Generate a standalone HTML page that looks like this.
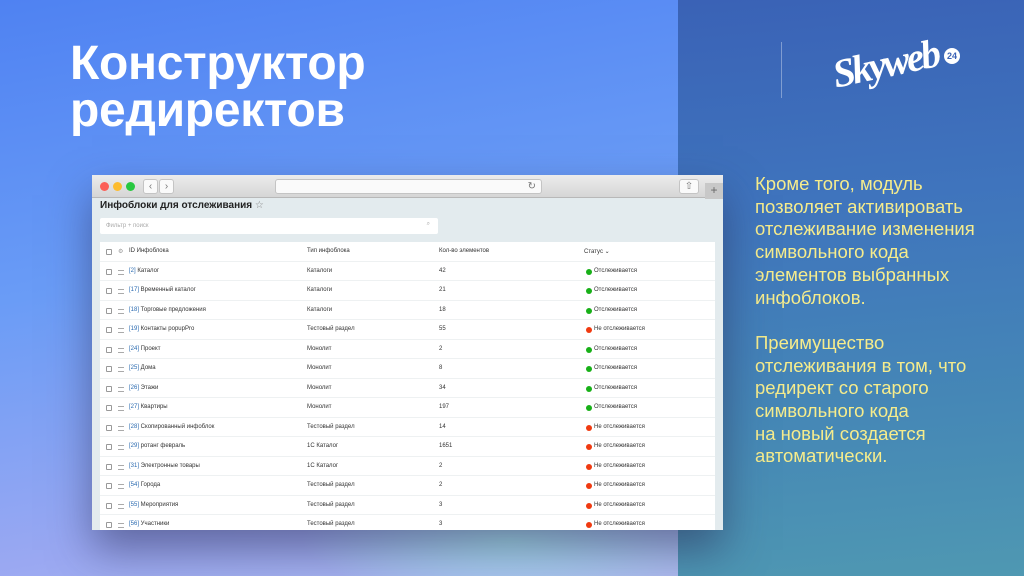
<!DOCTYPE html>
<html style="width:1024px;height:576px;overflow:hidden"><head><meta charset="utf-8"><style>
*{margin:0;padding:0;box-sizing:border-box}
body{width:1024px;height:576px;overflow:hidden;position:relative;font-family:"Liberation Sans","DejaVu Sans",sans-serif;
background:linear-gradient(170deg,#4f82f2 0%,#6a9cf6 40%,#9aa8f2 75%,#b8c4ee 100%)}
.glow{position:absolute;left:300px;top:480px;width:420px;height:120px;background:radial-gradient(ellipse,#a6e0ee 0%,rgba(166,224,238,0) 70%)}
.right{position:absolute;left:678px;top:0;width:346px;height:576px;background:linear-gradient(175deg,#3a62b6 0%,#3f74bd 35%,#4587b6 70%,#4f98b2 100%)}
.title{position:absolute;left:70px;top:40px;color:#fff;font-weight:bold;font-size:48px;line-height:47px;letter-spacing:-0.3px}
.txt{position:absolute;left:755px;top:173px;color:#f6ec8c;font-size:18.5px;line-height:22.7px}
.vline{position:absolute;left:781px;top:42px;width:1px;height:56px;background:rgba(255,255,255,.35)}
.logo{position:absolute;left:832px;top:40px;color:#fff;font:italic bold 40px "Liberation Serif",serif;transform:rotate(-12deg);letter-spacing:-3px}
.badge{position:absolute;left:944px;top:48px;width:16px;height:16px;border-radius:50%;background:#fff;color:#3a62b6;font-size:9px;font-weight:bold;text-align:center;line-height:16px}
.win{position:absolute;left:92px;top:175px;width:631px;height:355px;background:#e3ebee;box-shadow:0 20px 40px rgba(40,40,80,.5);overflow:hidden}
.bar{height:23px;background:linear-gradient(#ececec,#d6d6d6);border-bottom:1px solid #b8b8b8;position:relative}
.d{position:absolute;top:7px;width:9px;height:9px;border-radius:50%}
.btn{position:absolute;top:4px;height:15px;background:#fafafa;border:1px solid #c4c4c4;border-radius:3px;font-size:10px;color:#777;text-align:center;line-height:13px}
.h1{position:absolute;left:8px;top:25px;font-size:10px;font-weight:bold;color:#222}
.search{position:absolute;left:8px;top:43px;width:338px;height:16px;background:#fff;border-radius:2px;font-size:6px;color:#aaa;padding:5px 6px}
.tbl{position:absolute;left:8px;top:67px;width:615px;height:300px;background:#fff}
.r{position:absolute;left:0;width:615px;height:19.5px;border-bottom:1px solid #eef1f2;font-size:6px;color:#333}
.r span{position:absolute;top:6px}
.cb{position:absolute;left:6px;top:7px;width:6px;height:6px;border:1px solid #999;border-radius:1px}
.hd{position:absolute;left:18px;top:8px;width:6px;height:5px;border-top:1px solid #aaa;border-bottom:1px solid #aaa}
.dot{position:absolute;left:486px;top:7px;width:6px;height:6px;border-radius:50%}
.g{background:#18b018}.rd{background:#f03a10}
</style></head><body>
<div class="glow"></div>
<div class="right"></div>
<div class="title">Конструктор<br>редиректов</div>
<div class="vline"></div>
<div class="logo">Skyweb</div>
<div class="badge">24</div>
<div class="txt">Кроме того, модуль<br>позволяет активировать<br>отслеживание изменения<br>символьного кода<br>элементов выбранных<br>инфоблоков.<br><br>Преимущество<br>отслеживания в том, что<br>редирект со старого<br>символьного кода<br>на новый создается<br>автоматически.</div>
<div class="win">
<div class="bar">
<div class="d" style="left:8px;background:#fc5f57"></div><div class="d" style="left:21px;background:#fdbc2e"></div><div class="d" style="left:34px;background:#28c840"></div>
<div class="btn" style="left:51px;width:15px">‹</div><div class="btn" style="left:67px;width:15px">›</div>
<div class="btn" style="left:183px;width:267px;text-align:right;padding-right:5px">↻</div>
<div class="btn" style="left:587px;width:20px">⇧</div>
<div style="position:absolute;left:613px;top:8px;width:18px;height:16px;background:#c8c8c8;font-size:12px;color:#666;text-align:center;line-height:15px">+</div>
</div>
<div class="h1">Инфоблоки для отслеживания <span style="font-weight:normal;color:#888">☆</span></div>
<div class="search">Фильтр + поиск<span style="position:absolute;right:8px;top:3px">⌕</span></div>
<div class="tbl">
<div class="r" style="top:0"><div class="cb"></div><span style="left:18px;color:#999">⚙</span><span style="left:29px">ID Инфоблока</span><span style="left:207px">Тип инфоблока</span><span style="left:339px">Кол-во элементов</span><span style="left:484px">Статус ⌄</span></div>
<div id="rows"></div>
</div>
</div>
<script>
var d=[["2","Каталог","Каталоги","42",1],["17","Временный каталог","Каталоги","21",1],["18","Торговые предложения","Каталоги","18",1],["19","Контакты popupPro","Тестовый раздел","55",0],["24","Проект","Монолит","2",1],["25","Дома","Монолит","8",1],["26","Этажи","Монолит","34",1],["27","Квартиры","Монолит","197",1],["28","Скопированный инфоблок","Тестовый раздел","14",0],["29","ротанг февраль","1С Каталог","1651",0],["31","Электронные товары","1С Каталог","2",0],["54","Города","Тестовый раздел","2",0],["55","Мероприятия","Тестовый раздел","3",0],["56","Участники","Тестовый раздел","3",0]];
var h="";d.forEach(function(x,i){h+='<div class="r" style="top:'+(19.5*(i+1))+'px"><div class="cb"></div><div class="hd"></div><span style="left:29px"><b style="font-weight:normal;color:#2a6ab0">['+x[0]+']</b> '+x[1]+'</span><span style="left:207px">'+x[2]+'</span><span style="left:339px">'+x[3]+'</span><div class="dot '+(x[4]?'g':'rd')+'"></div><span style="left:494px">'+(x[4]?'Отслеживается':'Не отслеживается')+'</span></div>'});
document.getElementById("rows").outerHTML=h;
</script>
</body></html>
